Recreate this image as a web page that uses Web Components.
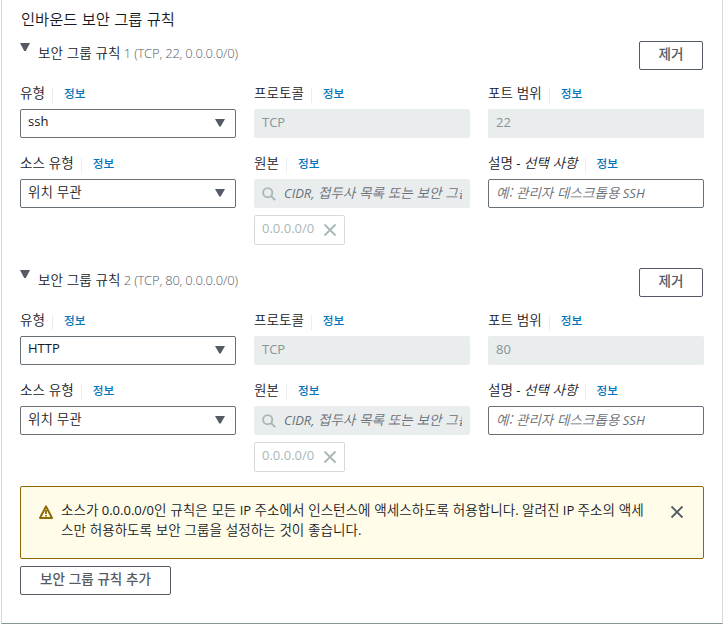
<!DOCTYPE html>
<html lang="ko">
<head>
<meta charset="utf-8">
<title>인바운드 보안 그룹 규칙</title>
<style>
html, body { margin: 0; height: 624px; overflow: hidden; background: #fff; }
body { font: 13px/19px "Open Sans", "Noto Sans CJK KR", sans-serif; color: #16191f; }
</style>
</head>
<body>
<security-panel></security-panel>
<script>
const base = `
  *, *::before { box-sizing: border-box; }
  .k { font-family: "Noto Sans CJK KR", sans-serif; font-size: 1.043em; font-weight: var(--kw, 350); }
`;
// Hangul is set slightly larger than the Latin text next to it.
const mix = s => s.replace(/[\uac00-\ud7a3]+(?::? +[\uac00-\ud7a3]+)*/g, m => `<span class="k">${m}</span>`);
const define = (name, render) => customElements.define(name, class extends HTMLElement {
  connectedCallback() {
    if (this.shadowRoot) return;
    const a = n => this.getAttribute(n) || '';
    this.attachShadow({ mode: 'open' }).innerHTML = `<style>${base}</style>` + render(a);
  }
});
const cross = `<svg width="14" height="14" viewBox="0 0 14 14"><path d="M1.5 1.5 12.5 12.5M12.5 1.5 1.5 12.5" fill="none" stroke="currentColor" stroke-width="1.8"/></svg>`;

define('ui-button', a => `<style>
  :host { display: block; box-sizing: border-box; height: 29px; border: 1px solid #545b64; border-radius: 2px; background: #fff;
    color: #545b64; text-align: center; line-height: 22px; --kw: 500; font-size: 13px; }
</style>${mix(a('text'))}`);

define('form-label', a => `<style>
  :host { display: flex; align-items: center; height: 16px; line-height: 16px; white-space: nowrap; }
  em { font-style: italic; }
  .info { margin-left: 7px; padding-left: 11px; border-left: 1px solid #eaeded; height: 15px; line-height: 9px; color: #0073bb; font-size: 11.2px; --kw: 500; position: relative; top: 1px; }
  .name { position: relative; top: -2px; white-space: pre; }
</style><span class="name">${mix(a('text'))}${a('optional') ? '<em>' + mix(a('optional')) + '</em>' : ''}</span><span class="info">${mix('정보')}</span>`);

define('ui-select', a => `<style>
  :host { display: flex; box-sizing: border-box; justify-content: space-between; height: 29px; border: 1px solid #687078; border-radius: 2px;
    padding: 0 10px 0 7px; line-height: 22px; background: #fff; white-space: nowrap; }
  svg { margin-top: 9px; }
</style><span>${mix(a('value'))}</span><svg width="10" height="8"><path d="M0 0H10L5.7 7.4H4.3Z" fill="#545b64"/></svg>`);

define('ui-input', a => `<style>
  :host { display: flex; box-sizing: border-box; align-items: flex-start; height: 29px; border: 1px solid #687078; border-radius: 2px; padding: 0 7px;
    line-height: 24px; color: #687078; background: #fff; white-space: nowrap; }
  :host([disabled]) { border-color: #eaeded; background: #eaeded; color: #879596; }
  span.t { flex: 1; min-width: 0; }
  :host([search]) span.t { overflow: hidden; }
  svg { margin: 7px 8px 0 0; flex: none; }
  .ph { font-style: italic; color: #687078; }
</style>${a('search') ? `<svg width="14" height="14" viewBox="0 0 14 14"><g fill="none" stroke="#aab7b8" stroke-width="1.9"><circle cx="5.7" cy="5.7" r="4.6"/><path d="m9 9 4.2 4.2"/></g></svg>` : ''}<span class="t ${a('placeholder') ? 'ph' : ''}">${mix(a('value') || a('placeholder'))}</span>`);

define('ui-token', a => `<style>
  :host { display: flex; box-sizing: border-box; justify-content: space-between; width: 91px; height: 30px; border: 1px solid #d5dbdb; border-radius: 2px;
    padding: 0 7px; line-height: 25px; color: #aab7b8; }
  svg { margin-top: 7px; }
</style><span>${a('text')}</span>${cross}`);

define('rule-section', a => `<style>
  :host { display: grid; grid-template-rows: 29px 68px 70px 30px; height: 227px; align-content: start; }
  header { display: flex; align-items: flex-start; padding-right: 1px; }
  header svg { margin: 2px 8px 0 0; }
  h2 { margin: 2px 0 0; font: inherit; line-height: 18px; flex: 1; white-space: pre; }
  h2 small { font-size: 13px; font-weight: 300; color: #545b64; letter-spacing: -.2px; }
  .row { display: grid; grid-template-columns: repeat(3, 216px); column-gap: 18px; padding-top: var(--pt); align-content: start; row-gap: var(--g); }
  ui-button { width: 64px; }
  .one { --pt: 16px; --g: 7px; } .two { --pt: 18px; --g: 7px; }
  .three { --pt: 7px; }
  ui-token { grid-column: 2; }
</style>
<header><svg width="10" height="8"><path d="M0 0H10L5.8 8H4.2Z" fill="#545b64"/></svg><h2>${mix('보안 그룹 규칙')} <small>${a('number')} (TCP, ${a('port')}, 0.0.0.0/0)</small></h2><ui-button text="제거"></ui-button></header>
<div class="row one"><form-label text="유형"></form-label><form-label text="프로토콜"></form-label><form-label text="포트 범위"></form-label>
<ui-select value="${a('type')}"></ui-select><ui-input disabled value="TCP"></ui-input><ui-input disabled value="${a('port')}"></ui-input></div>
<div class="row two"><form-label text="소스 유형"></form-label><form-label text="원본"></form-label><form-label text="설명 - " optional="선택 사항"></form-label>
<ui-select value="위치 무관"></ui-select><ui-input disabled search="1" placeholder="CIDR, 접두사 목록 또는 보안 그룹"></ui-input><ui-input placeholder="예: 관리자 데스크톱용 SSH"></ui-input></div>
<div class="row three"><ui-token text="0.0.0.0/0"></ui-token></div>`);

define('warning-alert', a => `<style>
  :host { display: flex; box-sizing: border-box; height: 73px; border: 1px solid #906806; border-radius: 2px; background: #fffce9; padding: 15px 19px 0 18px; align-items: flex-start; }
  .icon { margin: 3px 8px 0 0; flex: none; }
  p { margin: -2px 0 0; flex: 1; white-space: nowrap; }
  .x { color: #545b64; margin-top: 3px; display: flex; }
</style><svg class="icon" width="14" height="14" viewBox="0 0 14 14"><path d="M7 1.4 13 13H1Z" fill="none" stroke="#906806" stroke-width="2" stroke-linejoin="round"/><path d="M7 5v4M7 10v1.6" stroke="#906806" stroke-width="1.8"/></svg>
<p>${mix('소스가 0.0.0.0/0인 규칙은 모든 IP 주소에서 인스턴스에 액세스하도록 허용합니다. 알려진 IP 주소의 액세')}<br>${mix('스만 허용하도록 보안 그룹을 설정하는 것이 좋습니다.')}</p><span class="x">${cross}</span>`);

define('security-panel', a => `<style>
  :host { display: flex; flex-direction: column; box-sizing: border-box; height: 624px; width: 722px; margin-left: 1px; border: solid #d5dbdb; border-width: 0 1px 1px; border-bottom-color: #879596; padding: 0 18px; }
  h1 { margin: 0; height: 41px; padding-top: 7px; font: inherit; font-size: 14.7px; line-height: 22px; padding-left: 1px; }
  rule-section:nth-of-type(2) { height: 218px; }
  .add { width: 151px; margin-top: 7px; }
</style><h1>${mix('인바운드 보안 그룹 규칙')}</h1>
<rule-section number="1" port="22" type="ssh"></rule-section>
<rule-section number="2" port="80" type="HTTP"></rule-section>
<warning-alert></warning-alert>
<ui-button class="add" text="보안 그룹 규칙 추가"></ui-button>`);
</script>
</body>
</html>
